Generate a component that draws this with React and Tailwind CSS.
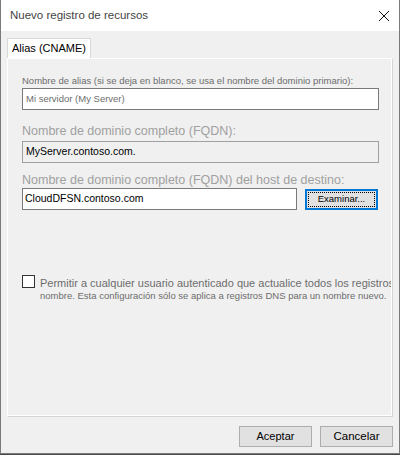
import React from 'react';

const font = { fontFamily: '"Liberation Sans", Arial, sans-serif' };

const App = () => {
  return (
    <div className="w-[400px] h-[455px] bg-[#4a4a4a]" style={font}>
      <div className="w-[400px] h-[454px] bg-[#f0f0f0] border-x border-b border-[#7a7a7a] flex flex-col">
        {/* title bar */}
        <div className="h-[31px] bg-white flex items-center pl-[9px] pr-[9px]">
          <span className="text-[11.5px] text-[#444]">Nuevo registro de recursos</span>
          <svg className="ml-auto" width="12" height="12" viewBox="0 0 12 12">
            <path d="M1 1 L11 11 M11 1 L1 11" stroke="#111" strokeWidth="1" fill="none" />
          </svg>
        </div>

        {/* tab header */}
        <div className="pt-[7px] pl-[6px]">
          <div className="w-[84px] h-[20px] bg-white border border-b-0 border-[#d9d9d9] flex items-center justify-center">
            <span className="text-[11px] text-black">Alias (CNAME)</span>
          </div>
        </div>

        {/* tab panel */}
        <div className="ml-[6px] w-[385px] h-[358px] border border-white shadow-[1px_1px_0_#d4d4d4] pl-[14px] overflow-hidden">
          <div className="mt-[15px] text-[9.5px] leading-[13px] text-[#6d6d6d] whitespace-nowrap">
            Nombre de alias (si se deja en blanco, se usa el nombre del dominio primario):
          </div>
          <div className="mt-[1px] w-[357px] h-[22px] bg-white border border-[#7a7a7a] flex items-center px-[3px]">
            <span className="text-[9.5px] text-[#6d6d6d]">Mi servidor (My Server)</span>
          </div>

          <div className="mt-[13px] text-[12.5px] leading-[16px] text-[#a0a0a0] whitespace-nowrap">
            Nombre de dominio completo (FQDN):
          </div>
          <div className="mt-[2px] w-[357px] h-[22px] bg-[#f0f0f0] border border-[#a0a0a0] flex items-center px-[3px]">
            <span className="text-[10.5px] text-black">MyServer.contoso.com.</span>
          </div>

          <div className="mt-[9px] text-[12.5px] leading-[16px] text-[#a0a0a0] whitespace-nowrap">
            Nombre de dominio completo (FQDN) del host de destino:
          </div>
          <div className="flex items-start">
            <div className="w-[275px] h-[22px] bg-white border border-[#7a7a7a] flex items-center px-[2px]">
              <span className="text-[10.5px] text-black">CloudDFSN.contoso.com</span>
            </div>
            <button className="ml-[8px] mt-[1px] w-[73px] h-[21px] bg-[#e1e1e1] border-2 border-[#0078d7] p-[1px]">
              <div className="w-full h-full border border-dotted border-black flex items-center justify-center">
                <span className="text-[9.5px] text-black">Examinar...</span>
              </div>
            </button>
          </div>

          <div className="mt-[65px] flex items-start">
            <div className="w-[13px] h-[13px] bg-white border border-[#333] shrink-0"></div>
            <div className="ml-[5px] mt-[1px] text-[#6d6d6d]">
              <div className="text-[11px] leading-[14px] whitespace-nowrap">
                Permitir a cualquier usuario autenticado que actualice todos los registros DNS
              </div>
              <div className="text-[9.5px] leading-[12px] whitespace-nowrap">
                nombre. Esta configuración sólo se aplica a registros DNS para un nombre nuevo.
              </div>
            </div>
          </div>
        </div>

        {/* dialog buttons */}
        <div className="mt-[10px] flex justify-end gap-[8px] pr-[6px]">
          <button className="w-[73px] h-[21px] bg-[#e1e1e1] border border-[#adadad] text-[11px] text-black">
            Aceptar
          </button>
          <button className="w-[73px] h-[21px] bg-[#e1e1e1] border border-[#adadad] text-[11.5px] text-black">
            Cancelar
          </button>
        </div>
      </div>
    </div>
  );
};

export default App;
